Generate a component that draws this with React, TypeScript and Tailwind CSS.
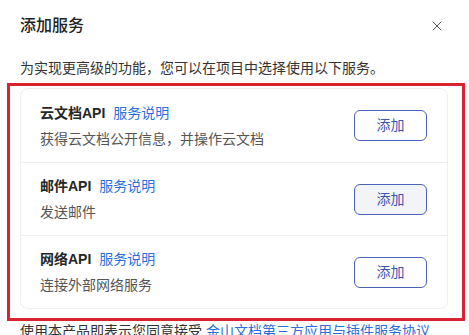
import { X } from "lucide-react";

interface Service {
  name: string;
  desc: string;
  hover?: boolean;
}

const services: Service[] = [
  { name: "云文档API", desc: "获得云文档公开信息，并操作云文档" },
  { name: "邮件API", desc: "发送邮件", hover: true },
  { name: "网络API", desc: "连接外部网络服务" },
];

const font = { fontFamily: '"Liberation Sans", "Noto Sans CJK SC", sans-serif' };

function ServiceRow({ service, first }: { service: Service; first: boolean }) {
  return (
    <div
      className={`flex h-[73px] items-center justify-between pl-[19px] pr-[20px] ${
        first ? "" : "border-t border-[#eceef2]"
      }`}
    >
      <div className="flex flex-col gap-[6px]">
        <div className="flex items-center gap-[8px] text-[14px] leading-[20px]">
          <span className="font-bold text-[#262626]">{service.name}</span>
          <span className="text-[#2a6fdb]">服务说明</span>
        </div>
        <p className="text-[14px] leading-[20px] text-[#555]">{service.desc}</p>
      </div>
      <button
        className={`h-[31px] w-[73px] rounded-[6px] border border-[#4a62b8] text-[14px] text-[#3e54b0] ${
          service.hover ? "bg-[#f3f4f8]" : "bg-white"
        }`}
      >
        添加
      </button>
    </div>
  );
}

export default function App() {
  return (
    <div
      className="h-[335px] w-[469px] overflow-hidden bg-white text-[#333]"
      style={font}
    >
      <div className="flex items-center justify-between pl-[20px] pr-[24px] pt-[14px]">
        <h2 className="text-[16px] font-medium leading-[24px] text-[#222]">添加服务</h2>
        <X size={16} strokeWidth={1.5} className="text-[#555]" />
      </div>

      <p className="mt-[20px] pl-[20px] text-[14px] leading-[20px] text-[#333]">
        为实现更高级的功能，您可以在项目中选择使用以下服务。
      </p>

      {/* red highlight frame */}
      <div className="ml-[7px] mt-[5px] w-[458px] border-[3px] border-[#d92330] pb-[9px] pl-[10px] pr-[14px] pt-[2px]">
        <div className="rounded-[8px] border border-[#eceef2]">
          {services.map((s, i) => (
            <ServiceRow key={s.name} service={s} first={i === 0} />
          ))}
        </div>
      </div>

      <p className="pl-[20px] text-[14px] leading-[20px] text-[#333]">
        使用本产品即表示您同意接受{" "}
        <span className="text-[#2a6fdb]">金山文档第三方应用与插件服务协议</span>
      </p>
    </div>
  );
}
